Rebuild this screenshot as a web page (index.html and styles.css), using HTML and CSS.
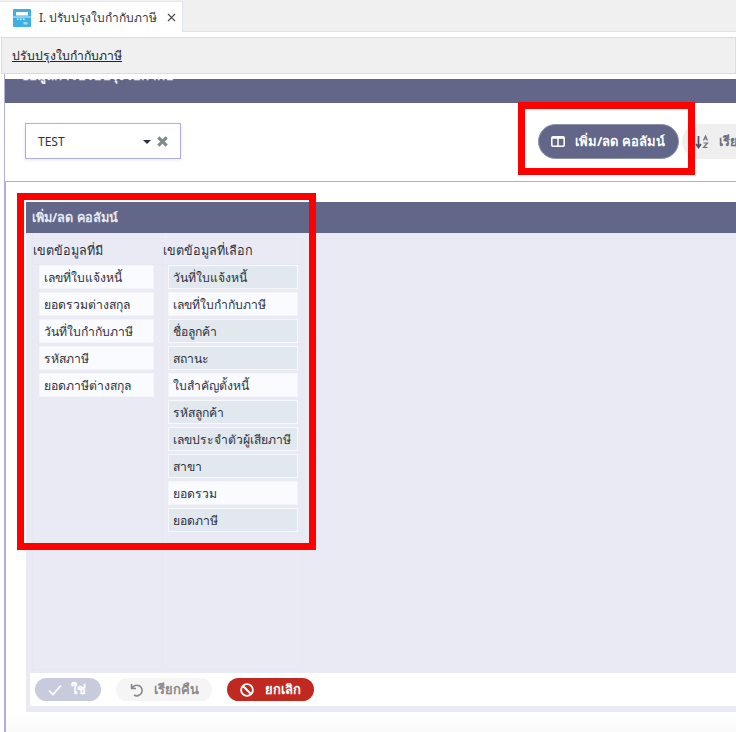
FILE: index.html
```html
<!DOCTYPE html>
<html lang="th">
<head>
<meta charset="utf-8">
<title>ปรับปรุงใบกำกับภาษี</title>
<link rel="stylesheet" href="styles.css">
</head>
<body>
<div class="tabbar">
  <div class="tab">
    <svg class="tab-icon" viewBox="0 0 18 18" width="18" height="18"><rect width="18" height="18" rx="1" fill="#3eaee8"/><rect x="3" y="3" width="12" height="3.500" fill="#fff"/><rect x="0" y="7.500" width="18" height="1" fill="#cfeafa"/><rect x="4" y="9.500" width="1.500" height="1.500" fill="#fff"/><rect x="7" y="9.500" width="1.500" height="1.500" fill="#fff"/><rect x="10" y="9.500" width="1.500" height="1.500" fill="#fff"/><rect x="10.500" y="13" width="4" height="2.500" fill="#9fe0c8"/></svg>
    <span class="tab-title">I. ปรับปรุงใบกำกับภาษี</span>
    <svg class="tab-close" viewBox="0 0 10 10" width="9" height="9"><path d="M1 1l8 8M9 1l-8 8" stroke="#333" stroke-width="1.200" fill="none"/></svg>
  </div>
</div>
<div class="crumb"><a class="crumb-link">ปรับปรุงใบกำกับภาษี</a></div>
<main class="page">
  <div class="top">
    <div class="band"><span class="band-text">ข้อมูลการปรับปรุงใบกำกับ</span></div>
    <div class="filters">
      <div class="select">
        <span class="select-value">TEST</span>
        <span class="caret"></span>
        <svg class="select-x" viewBox="0 0 10 10" width="11" height="11"><path d="M1.200 1.200l7.600 7.600M8.800 1.200l-7.600 7.600" stroke="#7e8c8c" stroke-width="2.800" fill="none"/></svg>
      </div>
      <div class="actions">
        <button class="btn-columns">
          <svg viewBox="0 0 14 11" width="14" height="11"><rect x=".8" y=".8" width="12.400" height="9.400" rx="1.200" fill="none" stroke="#fff" stroke-width="1.600"/><path d="M7 1v9" stroke="#fff" stroke-width="1.500"/><rect x="1" y="1" width="12" height="1.800" fill="#fff"/></svg>
          <span>เพิ่ม/ลด คอลัมน์</span>
        </button>
        <button class="btn-sort">
          <svg viewBox="0 0 14 14" width="14" height="14"><path d="M3.500 1v11M1 9l2.500 3.500L6 9" stroke="#4d5566" stroke-width="1.700" fill="none"/><path d="M8.500 5.500l2-4.500 2 4.500M9 4h3M8.500 8h4l-4 4.500h4" stroke="#6c7280" stroke-width="1.200" fill="none"/></svg>
          <span>เรียงลำดับ</span>
        </button>
      </div>
    </div>
  </div>
  <div class="lower">
    <section class="dialog">
      <header class="dialog-head">เพิ่ม/ลด คอลัมน์</header>
      <div class="dialog-body">
        <div class="col col-left">
          <h3 class="col-title">เขตข้อมูลที่มี</h3>
          <ul class="list">
            <li class="item">เลขที่ใบแจ้งหนี้</li>
            <li class="item">ยอดรวมต่างสกุล</li>
            <li class="item">วันที่ใบกำกับภาษี</li>
            <li class="item">รหัสภาษี</li>
            <li class="item">ยอดภาษีต่างสกุล</li>
          </ul>
        </div>
        <div class="col col-right">
          <h3 class="col-title">เขตข้อมูลที่เลือก</h3>
          <ul class="list">
            <li class="item on">วันที่ใบแจ้งหนี้</li>
            <li class="item">เลขที่ใบกำกับภาษี</li>
            <li class="item on">ชื่อลูกค้า</li>
            <li class="item on">สถานะ</li>
            <li class="item">ใบสำคัญตั้งหนี้</li>
            <li class="item on">รหัสลูกค้า</li>
            <li class="item on">เลขประจำตัวผู้เสียภาษี</li>
            <li class="item on">สาขา</li>
            <li class="item">ยอดรวม</li>
            <li class="item on">ยอดภาษี</li>
          </ul>
        </div>
      </div>
      <footer class="dialog-foot">
        <button class="pill pill-yes"><svg viewBox="0 0 14 12" width="14" height="12"><path d="M1 6.500l4 4 8-9" stroke="#fff" stroke-width="1.600" fill="none"/></svg><span>ใช่</span></button>
        <button class="pill pill-reset"><svg viewBox="0 0 14 14" width="14" height="14"><path d="M1.500 1v4.500h4.500M2 5.300A5.300 5.300 0 1 1 4 12" stroke="#8a8a8a" stroke-width="1.600" fill="none"/></svg><span>เรียกคืน</span></button>
        <button class="pill pill-cancel"><svg viewBox="0 0 14 14" width="14" height="14"><circle cx="7" cy="7" r="5.900" stroke="#fff" stroke-width="1.900" fill="none"/><path d="M3 3l8 8" stroke="#fff" stroke-width="1.900"/></svg><span>ยกเลิก</span></button>
      </footer>
    </section>
  </div>
</main>
<div class="mark mark-dialog"></div>
<div class="mark mark-button"></div>
</body>
</html>
```
FILE: styles.css
```css
* { box-sizing: border-box; }
html, body { margin: 0; height: 100%; overflow: hidden; }
body { width: 736px; height: 732px; position: relative; background: #fff; font-family: "Noto Sans", "Open Sans", sans-serif; font-size: 12px; color: #2f3140; }
button { font-family: inherit; border: 0; }
ul, h3 { margin: 0; padding: 0; list-style: none; font-weight: 400; }

.tabbar { height: 32px; background: #f0f0f0; border-bottom: 1px solid #dfe3ea; padding-top: 1px; display: flex; }
.tab { width: 183px; height: 31px; background: #fff; border-right: 1px solid #dfe3ea; border-top: 1px solid #e6e8ee; display: flex; align-items: center; padding-left: 13px; }
.tab-icon { flex: none; margin-top: 1px; }
.tab-title { margin-left: 8px; font-size: 12px; white-space: nowrap; color: #34363f; }
.tab-close { margin-left: 10px; flex: none; }

.crumb { margin: 5px 0 0 1px; height: 37px; background: #f0f0f0; border: 1px solid #dcdcdc; display: flex; align-items: center; padding-left: 10px; }
.crumb-link { text-decoration: underline; font-size: 12.200px; color: #22242c; }

.page { margin-left: 4px; height: 658px; overflow: hidden; }
.top { border-left: 1px solid #adb1d8; padding-top: 5px; }
.band { height: 24px; background: #62678a; overflow: hidden; padding-left: 15px; font-weight: 700; color: #eceef6; font-size: 13.500px; line-height: 14px; white-space: nowrap; }
.band-text { display: block; margin-top: -11px; }

.filters { height: 79px; border-bottom: 1px solid #adb1d8; display: flex; justify-content: space-between; padding: 20px 0 0 20px; }
.select { width: 156px; height: 36px; background: #fff; border: 1px solid #adb1d8; box-shadow: 0 1px 3px rgba(120,125,170,.2); display: flex; align-items: center; padding: 1px 12px 0 12px; }
.select-value { font-size: 12px; flex: 1; }
.caret { width: 0; height: 0; border: 4.500px solid transparent; border-top: 4.500px solid #2b2f3a; border-bottom: 0; margin-right: 6px; }
.actions { display: flex; width: 198px; flex: none; gap: 3px; margin-top: 1px; }
.btn-columns { flex: none; width: 141px; height: 35px; border-radius: 18px; background: #62678a; border: 1px solid #8e92b0; color: #fff; display: flex; align-items: center; padding: 0 0 0 12px; font-size: 13px; font-weight: 700; gap: 10px; white-space: nowrap; }
.btn-sort { flex: none; width: 100px; height: 35px; border-radius: 18px 0 0 18px; background: #efefef; color: #6b6f7c; display: flex; align-items: center; padding: 0 0 0 13px; font-size: 13px; font-weight: 700; gap: 10px; white-space: nowrap; }

.lower { border-left: 2px solid #adb1d8; height: 553px; padding-top: 20px; background: linear-gradient(#fff 96%, #f9f9f9 100%); }
.dialog { margin-left: 20px; height: 510px; background: #e9eaf4; display: flex; flex-direction: column; }
.dialog-head { height: 31px; flex: none; background: #62678a; color: #e8e9f2; font-weight: 700; font-size: 12.700px; display: flex; align-items: center; padding-left: 6px; }
.dialog-body { flex: 1; display: flex; padding-left: 6px; min-height: 0; }
.col { display: flex; flex-direction: column; border-left: 1px dotted #e4e5f0; margin-bottom: 3px; border-bottom: 1px dotted #e4e5f0; }
.col-left { width: 130px; }
.col-right { width: 141px; border-right: 1px dotted #e4e5f0; }
.col-title { height: 32px; display: flex; align-items: center; font-size: 12.600px; padding-top: 5px; border-bottom: 1px dotted #e4e5f0; }
.list { display: flex; flex-direction: column; gap: 3px; margin-left: 6px; }
.col-left .list { width: 115px; }
.col-right .list { width: 130px; margin-left: 5px; }
.item { height: 24px; background: #fafbfe; border: 1px solid #f4f5fa; padding-left: 4px; display: flex; align-items: center; font-size: 12.200px; white-space: nowrap; color: #2f3140; }
.item.on { background: #e1e8ee; border-color: #f6f8fb; }

.dialog-foot { height: 33px; flex: none; margin: 0 0 6px 4px; background: #fff; display: flex; align-items: center; padding-left: 5px; gap: 15px; }
.pill { height: 23px; border-radius: 12px; display: flex; align-items: center; font-size: 13px; font-weight: 700; white-space: nowrap; padding: 0; }
.pill-yes { width: 66px; background: #c8cbdc; color: #fff; padding-left: 13px; gap: 9px; }
.pill-reset { width: 96px; background: #f5f5f5; color: #8a8a8a; padding-left: 14px; gap: 10px; }
.pill-cancel { width: 87px; background: #c0291f; color: #fff; padding-left: 13px; gap: 11px; }

.mark { position: absolute; border: 7px solid #f00; pointer-events: none; }
.mark-dialog { left: 17px; top: 193px; width: 299px; height: 357px; }
.mark-button { left: 518px; top: 102px; width: 177px; height: 73px; }
```
